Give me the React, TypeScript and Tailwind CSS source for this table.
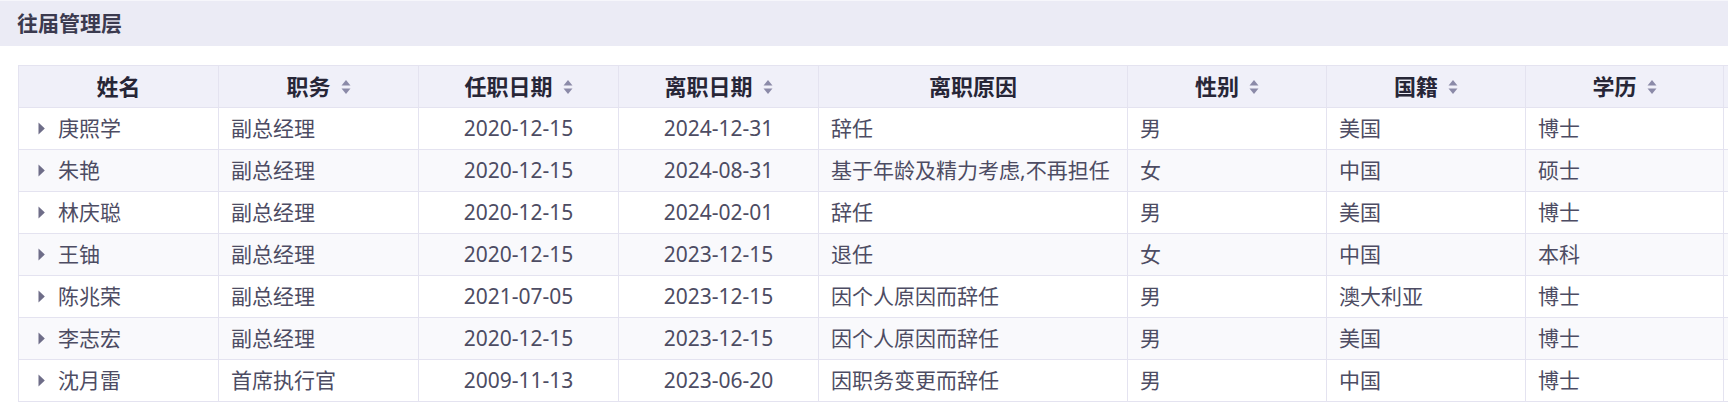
import React from "react";

const rows = [
  ["庚照学", "副总经理", "2020-12-15", "2024-12-31", "辞任", "男", "美国", "博士"],
  ["朱艳", "副总经理", "2020-12-15", "2024-08-31", "基于年龄及精力考虑,不再担任", "女", "中国", "硕士"],
  ["林庆聪", "副总经理", "2020-12-15", "2024-02-01", "辞任", "男", "美国", "博士"],
  ["王铀", "副总经理", "2020-12-15", "2023-12-15", "退任", "女", "中国", "本科"],
  ["陈兆荣", "副总经理", "2021-07-05", "2023-12-15", "因个人原因而辞任", "男", "澳大利亚", "博士"],
  ["李志宏", "副总经理", "2020-12-15", "2023-12-15", "因个人原因而辞任", "男", "美国", "博士"],
  ["沈月雷", "首席执行官", "2009-11-13", "2023-06-20", "因职务变更而辞任", "男", "中国", "博士"],
];

const headers: { label: string; sort: boolean }[] = [
  { label: "姓名", sort: false },
  { label: "职务", sort: true },
  { label: "任职日期", sort: true },
  { label: "离职日期", sort: true },
  { label: "离职原因", sort: false },
  { label: "性别", sort: true },
  { label: "国籍", sort: true },
  { label: "学历", sort: true },
  { label: "", sort: false },
];

const centered = [false, false, true, true, false, false, false, false, false];

function SortIcon() {
  return (
    <svg width="10" height="16" viewBox="0 0 10 16" className="ml-[10px] shrink-0">
      <path d="M5 1 L9.5 6.5 L0.5 6.5 Z" fill="#8b8aa8" />
      <path d="M0.5 9.5 L9.5 9.5 L5 15 Z" fill="#8b8aa8" />
    </svg>
  );
}

function Caret() {
  return (
    <svg width="7" height="13" viewBox="0 0 7 13" className="shrink-0">
      <path d="M0.5 0.5 L6.8 6.5 L0.5 12.5 Z" fill="#6e6d88" />
    </svg>
  );
}

export default function App() {
  const grid =
    "grid grid-cols-[200px_200px_200px_200px_309px_199px_199px_198px_200px]";
  return (
    <div
      className="w-[1728px] h-[404px] overflow-hidden bg-white"
      style={{ fontFamily: '"Noto Sans", "Noto Sans CJK SC", sans-serif' }}
    >
      <div className="h-[46px] bg-[#ebebf5] border-t border-[#f6f6fb] flex items-center pl-[17px]">
        <span className="text-[21px] font-bold text-[#3b3a4f]">往届管理层</span>
      </div>
      <div className="pl-[18px] pt-[19px]">
        <div className="w-max border-l border-t border-[#e4e3f0]">
          <div className={`${grid} bg-[#f0f0f9]`}>
            {headers.map((h, i) => (
              <div
                key={i}
                className="h-[42px] border-r border-b border-[#e4e3f0] flex items-center justify-center text-[22px] font-bold text-[#272637]"
              >
                <span>{h.label}</span>
                {h.sort && <SortIcon />}
              </div>
            ))}
          </div>
          {rows.map((r, ri) => (
            <div
              key={ri}
              className={`${grid} ${ri % 2 === 1 ? "bg-[#f9f9fc]" : "bg-white"}`}
            >
              {[...r, ""].map((c, ci) => (
                <div
                  key={ci}
                  className={`h-[42px] border-r border-b border-[#e4e3f0] flex items-center text-[21px] text-[#4d4c63] whitespace-nowrap ${
                    centered[ci] ? "justify-center" : "px-[12px]"
                  } ${ci === 0 ? "pl-[19px] gap-[13px]" : ""}`}
                >
                  {ci === 0 && <Caret />}
                  <span>{c}</span>
                </div>
              ))}
            </div>
          ))}
        </div>
      </div>
    </div>
  );
}
